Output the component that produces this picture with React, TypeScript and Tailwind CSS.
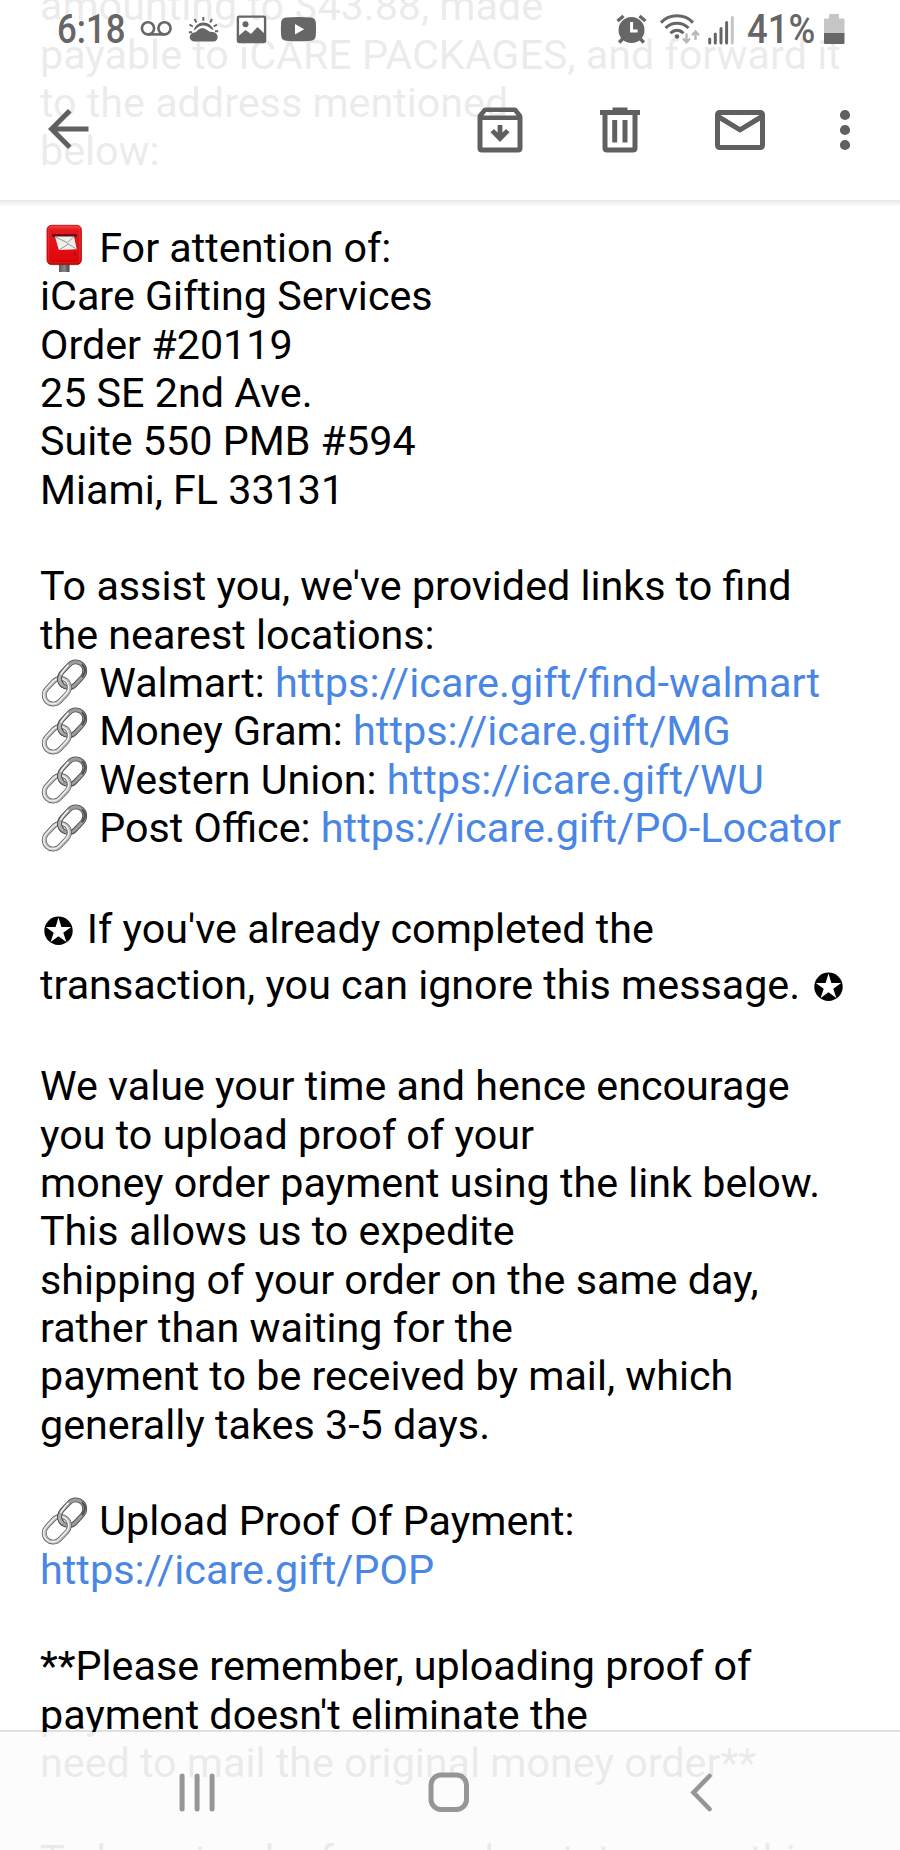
import React from "react";

const INK = "#666666";
const BAR = "#5f6062";

function Line({ children }: { children?: React.ReactNode }) {
  return <div className="h-[48.34px] whitespace-pre leading-[48.34px]">{children}</div>;
}

function StarLine({ children }: { children: React.ReactNode }) {
  return <div className="h-[56.7px] whitespace-pre leading-[56.7px]">{children}</div>;
}

function Url({ children }: { children: React.ReactNode }) {
  return <a className="text-[41.42px] text-[#4a86e3]">{children}</a>;
}

function LinkEmoji() {
  return (
    <svg className="-mt-2 inline-block h-[50px] w-[49px] overflow-visible align-[-11px]" viewBox="0.5 0 49 50">
      <g fill="none" transform="rotate(-47 25 25)">
        <rect x="22" y="16" width="28.500" height="18" rx="9" stroke="#4a4a4a" strokeWidth="4.800" />
        <rect x="22" y="16" width="28.500" height="18" rx="9" stroke="#9c9c9c" strokeWidth="3.200" />
        <path d="M27 17.200Q31 15.400 41 15.600" stroke="#f2f2f2" strokeWidth="1.500" />
        <path d="M41 34Q51 33 50.500 25" stroke="#4f4f4f" strokeWidth="2" />
        <rect x="-0.500" y="16" width="28.500" height="18" rx="9" stroke="#5a5a5a" strokeWidth="4.800" />
        <rect x="-0.500" y="16" width="28.500" height="18" rx="9" stroke="#bababa" strokeWidth="3.400" />
        <rect x="-0.900" y="15.500" width="28.500" height="18" rx="9" stroke="#f3f3f3" strokeWidth="1.300" />
        <path d="M22 26Q21.500 18.500 28 16.700" stroke="#4a4a4a" strokeWidth="4.800" />
        <path d="M22 26Q21.500 18.500 28 16.700" stroke="#b0b0b0" strokeWidth="3" />
      </g>
    </svg>
  );
}

function MailboxEmoji() {
  return (
    <svg className="-mt-2 inline-block h-[50px] w-[49px] overflow-visible align-[-11px]" viewBox="0.5 0 49 50">
      <defs>
        <linearGradient id="box" x1="0" x2="0" y1="0" y2="1">
          <stop offset="0" stopColor="#f0464a" />
          <stop offset="0.12" stopColor="#e3191f" />
          <stop offset="0.88" stopColor="#e0070b" />
          <stop offset="1" stopColor="#a80508" />
        </linearGradient>
        <linearGradient id="post" x1="0" x2="1" y1="0" y2="0">
          <stop offset="0" stopColor="#5b5b5b" />
          <stop offset="0.5" stopColor="#8a8a8a" />
          <stop offset="1" stopColor="#454545" />
        </linearGradient>
      </defs>
      <rect x="19.500" y="38" width="10.500" height="11" fill="url(#post)" />
      <rect x="7.500" y="2.300" width="34.400" height="39.300" rx="4.500" fill="url(#box)" stroke="#b90c10" strokeWidth="0.900" />
      <rect x="9.100" y="3.900" width="31.200" height="36" rx="3.600" fill="none" stroke="#f2484a" strokeWidth="0.700" opacity="0.700" />
      <rect x="12.500" y="11" width="25" height="3" rx="1" fill="#6b0b10" />
      <path d="M15.500 13.500H34.500L37.300 26.200 19.300 27z" fill="#efefed" />
      <path d="M16 14L27.500 19.500Q29 20.500 27.500 22L19.300 27M34.500 13.500L28.200 19.500M28.500 21L37.300 26.200" fill="none" stroke="#8e8e8a" strokeWidth="0.900" />
      <path d="M35.500 29v3.500" stroke="#a50a0e" strokeWidth="1.200" />
    </svg>
  );
}

function CircledStar() {
  return (
    <svg className="-mt-2 inline-block h-[36px] w-[36.6px] align-[-6px]" viewBox="0 0 36.6 36">
      <circle cx="18.5" cy="17.8" r="14.2" fill="#000" />
      <path
        d="M18.5 4.6 L21.4 14 L31.2 14 L23.3 19.7 L26.4 29.1 L18.5 23.3 L10.6 29.1 L13.7 19.7 L5.8 14 L15.6 14 Z"
        fill="#fff"
      />
    </svg>
  );
}

function Message() {
  return (
    <article className="-mt-[17.6px] pl-10 text-black">
      <Line>amounting to $43.88, made</Line>
      <Line>payable to iCARE PACKAGES, and forward it</Line>
      <Line>to the address mentioned</Line>
      <Line>below:</Line>
      <Line />
      <Line><MailboxEmoji /> For attention of:</Line>
      <Line>iCare Gifting Services</Line>
      <Line>Order #20119</Line>
      <Line>25 SE 2nd Ave.</Line>
      <Line>Suite 550 PMB #594</Line>
      <Line>Miami, FL 33131</Line>
      <Line />
      <Line>To assist you, we've provided links to find</Line>
      <Line>the nearest locations:</Line>
      <Line><LinkEmoji /> Walmart: <Url>https://icare.gift/find-walmart</Url></Line>
      <Line><LinkEmoji /> Money Gram: <Url>https://icare.gift/MG</Url></Line>
      <Line><LinkEmoji /> Western Union: <Url>https://icare.gift/WU</Url></Line>
      <Line><LinkEmoji /> Post Office: <Url>https://icare.gift/PO-Locator</Url></Line>
      <Line />
      <StarLine><CircledStar /> If you've already completed the</StarLine>
      <StarLine>transaction, you can ignore this message. <CircledStar /></StarLine>
      <Line />
      <Line>We value your time and hence encourage</Line>
      <Line>you to upload proof of your</Line>
      <Line>money order payment using the link below.</Line>
      <Line>This allows us to expedite</Line>
      <Line>shipping of your order on the same day,</Line>
      <Line>rather than waiting for the</Line>
      <Line>payment to be received by mail, which</Line>
      <Line>generally takes 3-5 days.</Line>
      <Line />
      <Line><LinkEmoji /> Upload Proof Of Payment:</Line>
      <Line><Url>https://icare.gift/POP</Url></Line>
      <Line />
      <Line>**Please remember, uploading proof of</Line>
      <Line>payment doesn't eliminate the</Line>
      <Line>need to mail the original money order**</Line>
      <Line />
      <Line>To keep track of your order status, use this</Line>
    </article>
  );
}

function StatusBar() {
  return (
    <div className="flex h-[60px] items-start pl-[57px] pt-[9px] font-medium leading-[40px] text-[#666666]">
      <div className="w-[79px]">
        <span className="inline-block origin-left scale-x-[0.87] text-[40px]">6:18</span>
      </div>
      <svg className="mt-px h-[40px] w-[190px]" viewBox="136 10 190 40" fill={INK}>
        <g fill="none" stroke={INK} strokeWidth="2.6">
          <circle cx="148" cy="28.3" r="6.1" />
          <circle cx="164.5" cy="28.3" r="6.1" />
          <path d="M148 34.4h16.5" />
        </g>
        <path d="M194 41.5a4.5 4.5 0 0 1 .5-9c2.500-.2 3-3.500 7.200-4.200 4-.5 6 2.700 8.300 3.400 1.500.4 2.500 0 4 .6 5.500 1.800 4.500 9.200-.5 9.200z" />
        <path d="M193.500 30.500a10.300 10.300 0 0 1 20-.4c-3.200-.2-4-4.400-10.200-4.600-5 0-6.500 3.800-9.800 5z" />
        <path d="M203.300 17v3.800M194.600 19l1.800 3.500M212 19l-1.800 3.500M189.500 24.500l3.300 2M217 24.500l-3.300 2M188.800 32.200h3.200M215 31.300h3.200" stroke={INK} strokeWidth="2" fill="none" />
        <rect x="237.900" y="16.600" width="27.200" height="25.400" rx="1.200" fill="none" stroke={INK} strokeWidth="2.400" />
        <circle cx="245.500" cy="24.300" r="3" />
        <path d="M238.500 36l7-6 5.500 4 6.500-7 7.500 7v8h-26.500z" />
        <path fillRule="evenodd" d="M286 17.600q12.500-1.200 25 0 4.500.3 4.800 5 .5 6.500 0 13-.4 4.800-4.800 5.200-12.500 1-25 0-4.500-.4-4.900-5.200-.5-6.500 0-13 .4-4.700 4.900-5zM295 24.100v10.400l9.200-5.200z" />
      </svg>
      <svg className="ml-[286px] mt-px h-[40px] w-[128px]" viewBox="612 10 128 40" fill={INK}>
        <circle cx="631.500" cy="30" r="13" />
        <path d="M617.500 21l6-5M645.500 21l-6-5M623 38.500l-3.800 4M640 38.500l3.800 4" stroke={INK} strokeWidth="3.400" />
        <path d="M631.600 22v9h6" fill="none" stroke="#fff" strokeWidth="3" />
        <g fill="none" stroke={INK} strokeWidth="3">
          <path d="M661 22.600c8.500-9 23.500-9 32 0M665.500 28c6.500-6.500 16.500-6.500 23 0M670.500 33.300c4-4 9-4 13 0" />
        </g>
        <circle cx="677" cy="36.500" r="2.300" />
        <path d="M686.500 33.500v8M683 38.500l3.500 3.800 3.500-3.800M695.500 40v-8M692 35.300l3.500-3.800 3.500 3.800" fill="none" stroke="#b8b8b8" strokeWidth="2.400" />
        <path d="M709.700 39v4M715.300 34v9M721 28.500V43M726.600 22.500V43" stroke={INK} strokeWidth="3" strokeLinecap="round" />
        <path d="M732.300 17.500V43" stroke="#c4c4c4" strokeWidth="3" strokeLinecap="round" />
      </svg>
      <div className="ml-[7px] w-[75px]">
        <span className="inline-block origin-left scale-x-[0.91] text-[40px]">41%</span>
      </div>
      <svg className="mt-px h-[40px] w-[24px]" viewBox="821 10 24 40">
        <path d="M829 14h8q1 0 1 1v3.500h4.500q1 0 1 1V33H823V19.500q0-1 1-1h4V15q0-1 1-1z" fill="#c6c6c6" />
        <path d="M823 33h20.500v10q0 1-1 1H824q-1 0-1-1z" fill={INK} />
      </svg>
    </div>
  );
}

function Toolbar() {
  return (
    <div className="flex h-[140px] items-start pl-[38px] pt-10">
      <svg className="-mt-px h-[60px] w-[60px]" viewBox="0 0 24 24" fill={BAR}>
        <path d="M20.200 11H7.830l5.590-5.590L12 4l-8 8 8 8 1.410-1.410L7.830 13H20.200v-2z" />
      </svg>
      <svg className="ml-[372px] h-[60px] w-[60px]" viewBox="0 0 60 60">
        <path
          fill={BAR}
          fillRule="evenodd"
          d="M15.500 7.500h29q1.800 0 2.900 1.400l4 5q1.100 1.400 1.100 3.200V48q0 4.500-4.500 4.500H12q-4.500 0-4.500-4.500V17.100q0-1.800 1.100-3.200l4-5q1.100-1.400 2.900-1.400zM16.200 12l-2.700 3.500h33L43.800 12zM12.500 20v27.500h35V20z"
        />
        <path fill={BAR} d="M27.600 25h4.800v7.600l3.700-3.700 3.400 3.300-9.500 9.800-9.500-9.800 3.400-3.300 3.700 3.700z" />
      </svg>
      <svg className="ml-[60px] h-[60px] w-[60px]" viewBox="0 0 60 60">
        <path
          fill={BAR}
          fillRule="evenodd"
          d="M22.500 7.500h15V10H50v5h-2.500v33q0 4.500-4.500 4.500H17q-4.500 0-4.500-4.500V15H10v-5h12.500zM17.500 15v32.500h25V15z"
        />
        <path fill={BAR} d="M22.200 20h5v22.500h-5zM32.500 20h5v22.500h-5z" />
      </svg>
      <svg className="ml-[60px] h-[60px] w-[60px]" viewBox="0 0 60 60">
        <rect x="7.500" y="12.500" width="45" height="35" rx="2" fill="none" stroke={BAR} strokeWidth="5" />
        <path d="M8 16.500L30 29.900 52 16.500" fill="none" stroke={BAR} strokeWidth="5" />
      </svg>
      <svg className="ml-[45px] h-[60px] w-[60px]" viewBox="0 0 60 60" fill={BAR}>
        <circle cx="30" cy="15" r="5.100" />
        <circle cx="30" cy="30" r="5.100" />
        <circle cx="30" cy="45" r="5.100" />
      </svg>
    </div>
  );
}

export default function App() {
  return (
    <div className="relative h-[1850px] w-[900px] overflow-hidden bg-white font-['Roboto',sans-serif] text-[41.25px]">
      <Message />
      <header className="absolute inset-x-0 top-0 h-[200px] bg-white/92">
        <StatusBar />
        <Toolbar />
        <div className="h-[7px] bg-linear-to-b from-[#e6e8e8] to-white" />
      </header>
      <nav className="absolute inset-x-0 bottom-0 h-[120px] border-t-2 border-black/12 bg-[#fcfcfc]/93 bg-clip-padding">
        <div className="flex h-[118px] items-start gap-[192px] pl-[166.5px] pt-[30px]">
          <svg className="h-[60px] w-[60px]" viewBox="166.500 1762 60 60">
            <path d="M181.600 1776v33M196.600 1776v33M211.600 1776v33" stroke="#969696" strokeWidth="5" strokeLinecap="round" />
          </svg>
          <svg className="h-[60px] w-[60px]" viewBox="418.500 1762 60 60">
            <rect x="430.500" y="1775" width="35.500" height="34.500" rx="10" fill="none" stroke="#969696" strokeWidth="5" />
          </svg>
          <svg className="h-[60px] w-[60px]" viewBox="670.500 1762 60 60">
            <path d="M709 1776l-16 16.500 16 16.500" fill="none" stroke="#969696" strokeWidth="4.600" strokeLinecap="round" />
          </svg>
        </div>
      </nav>
    </div>
  );
}
